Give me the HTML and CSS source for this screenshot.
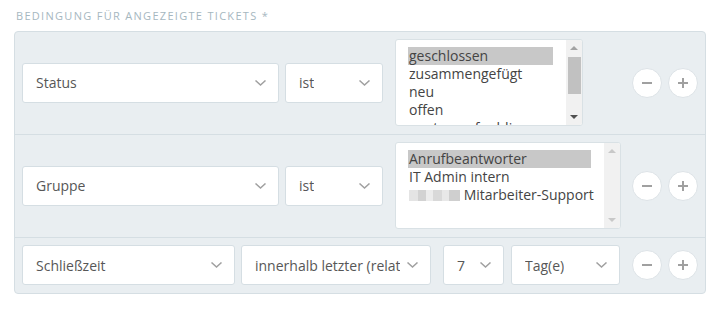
FILE: index.html
```html
<!DOCTYPE html>
<html lang="de">
<head>
    <meta charset="UTF-8">
    <meta name="viewport" content="width=device-width, initial-scale=1.0">
    <title>Bedingung für angezeigte Tickets</title>
    <link rel="stylesheet" href="styles.css">
</head>
<body>
    <div class="field">
        <div class="field-label">Bedingung für angezeigte Tickets *</div>

        <div class="conditions">
            <!-- Status -->
            <div class="condition">
                <div class="select attr-wide"><span>Status</span><svg class="chevron" viewBox="0 0 11 6"><polyline points="0.5,0.5 5.5,5 10.5,0.5"/></svg></div>
                <div class="select op"><span>ist</span><svg class="chevron" viewBox="0 0 11 6"><polyline points="0.5,0.5 5.5,5 10.5,0.5"/></svg></div>
                <div class="value">
                    <div class="listbox narrow">
                        <ul class="options">
                            <li class="selected">geschlossen</li>
                            <li>zusammengefügt</li>
                            <li>neu</li>
                            <li>offen</li>
                            <li>warten auf schliessen</li>
                        </ul>
                        <div class="scrollbar">
                            <span class="arrow up"></span>
                            <span class="thumb"></span>
                            <span class="arrow down"></span>
                        </div>
                    </div>
                </div>
                <div class="actions">
                    <button class="round" type="button"><span class="minus"></span></button>
                    <button class="round" type="button"><span class="plus"></span></button>
                </div>
            </div>

            <!-- Gruppe -->
            <div class="condition">
                <div class="select attr-wide"><span>Gruppe</span><svg class="chevron" viewBox="0 0 11 6"><polyline points="0.5,0.5 5.5,5 10.5,0.5"/></svg></div>
                <div class="select op"><span>ist</span><svg class="chevron" viewBox="0 0 11 6"><polyline points="0.5,0.5 5.5,5 10.5,0.5"/></svg></div>
                <div class="value">
                    <div class="listbox">
                        <ul class="options">
                            <li class="selected">Anrufbeantworter</li>
                            <li>IT Admin intern</li>
                            <li><span class="redacted"></span> Mitarbeiter-Support</li>
                        </ul>
                        <div class="scrollbar disabled">
                            <span class="arrow up"></span>
                            <span class="arrow down"></span>
                        </div>
                    </div>
                </div>
                <div class="actions">
                    <button class="round" type="button"><span class="minus"></span></button>
                    <button class="round" type="button"><span class="plus"></span></button>
                </div>
            </div>

            <!-- Schließzeit -->
            <div class="condition">
                <div class="select attr-short"><span>Schließzeit</span><svg class="chevron" viewBox="0 0 11 6"><polyline points="0.5,0.5 5.5,5 10.5,0.5"/></svg></div>
                <div class="select op-long"><span>innerhalb letzter (relativ)</span><svg class="chevron" viewBox="0 0 11 6"><polyline points="0.5,0.5 5.5,5 10.5,0.5"/></svg></div>
                <div class="select num"><span>7</span><svg class="chevron" viewBox="0 0 11 6"><polyline points="0.5,0.5 5.5,5 10.5,0.5"/></svg></div>
                <div class="select unit"><span>Tag(e)</span><svg class="chevron" viewBox="0 0 11 6"><polyline points="0.5,0.5 5.5,5 10.5,0.5"/></svg></div>
                <div class="actions">
                    <button class="round" type="button"><span class="minus"></span></button>
                    <button class="round" type="button"><span class="plus"></span></button>
                </div>
            </div>
        </div>
    </div>
</body>
</html>
```

FILE: styles.css
```css
body {
    margin: 0;
    background: #fff;
    font-family: "Open Sans", "Noto Sans", sans-serif;
    color: #555;
}

.field {
    padding: 9px 12px 0 14px;
}

.field-label {
    margin: 0 0 8px 2px;
    font-size: 11px;
    line-height: 14px;
    letter-spacing: 1.3px;
    text-transform: uppercase;
    color: #a6b7bf;
}

.conditions {
    width: 690px;
    background: #e9eef1;
    border: 1px solid #d5dee3;
    border-radius: 4px;
}

.condition {
    display: flex;
    align-items: center;
    padding: 7px 7px 8px 7px;
    border-bottom: 1px solid #d5dee3;
}

.condition:last-child {
    border-bottom: none;
}

/* select boxes */
.select {
    position: relative;
    box-sizing: border-box;
    height: 40px;
    display: flex;
    align-items: center;
    padding: 0 32px 0 13px;
    background: #fff;
    border: 1px solid #d5dee3;
    border-radius: 3px;
    font-size: 14px;
    color: #575757;
    white-space: nowrap;
    overflow: hidden;
    margin-right: 6px;
}

.select span {
    overflow: hidden;
}

.chevron {
    position: absolute;
    right: 12px;
    top: 16px;
    width: 11px;
    height: 6px;
    fill: none;
    stroke: #a0a0a0;
    stroke-width: 1.5;
}

.attr-wide { width: 257px; }
.op { width: 98px; margin-right: 12px; }
.attr-short { width: 213px; }
.op-long { width: 190px; margin-right: 12px; padding-right: 30px; }
.num { width: 61px; margin-right: 7px; }
.unit { width: 109px; margin-right: 12px; }

/* multi select */
.value {
    width: 226px;
    margin-right: 11px;
}

.listbox {
    position: relative;
    box-sizing: border-box;
    height: 87px;
    background: #fff;
    border: 1px solid #d9e1e5;
    border-radius: 3px;
    overflow: hidden;
}

.listbox.narrow {
    width: 188px;
}

.options {
    list-style: none;
    margin: 0;
    padding: 7px 29px 0 12px;
    font-size: 14px;
    line-height: 18px;
    color: #444;
}

.options li {
    white-space: nowrap;
    padding-left: 1px;
}

.options li.selected {
    background: #c8c8c8;
}

/* pixelated name, hidden in the screenshot */
.redacted {
    display: inline-block;
    width: 51px;
    height: 11px;
    margin-top: 4px;
    vertical-align: top;
    background:
        linear-gradient(90deg, #e4e4e4 0 9px, #d2d2d2 9px 17px, #ececec 17px 24px, #d9d9d9 24px 33px, #e8e8e8 33px 40px, #cfcfcf 40px 51px);
    filter: blur(0.6px);
}

.scrollbar {
    position: absolute;
    top: 0;
    right: 0;
    bottom: 0;
    width: 16px;
    background: #f1f1f1;
}

.scrollbar .thumb {
    position: absolute;
    left: 2px;
    right: 1px;
    top: 17px;
    height: 37px;
    background: #c1c1c1;
}

.arrow {
    position: absolute;
    left: 4px;
    width: 0;
    height: 0;
    border-left: 4px solid transparent;
    border-right: 4px solid transparent;
}

.arrow.up {
    top: 6px;
    border-bottom: 4px solid #a3a3a3;
}

.arrow.down {
    bottom: 6px;
    border-top: 4px solid #505050;
}

.scrollbar.disabled .arrow.up {
    border-bottom-color: #c8c8c8;
}

.scrollbar.disabled .arrow.down {
    border-top-color: #c8c8c8;
}

/* add / remove buttons */
.actions {
    display: flex;
    gap: 6px;
}

.round {
    position: relative;
    box-sizing: border-box;
    width: 30px;
    height: 30px;
    padding: 0;
    background: #fff;
    border: 1px solid #dde3e7;
    border-radius: 50%;
}

.minus,
.plus::before,
.plus::after {
    position: absolute;
    left: 9px;
    top: 13px;
    width: 10px;
    height: 2px;
    background: #a0a0a0;
}

.plus::before,
.plus::after {
    content: "";
}

.plus::after {
    transform: rotate(90deg);
}
```
